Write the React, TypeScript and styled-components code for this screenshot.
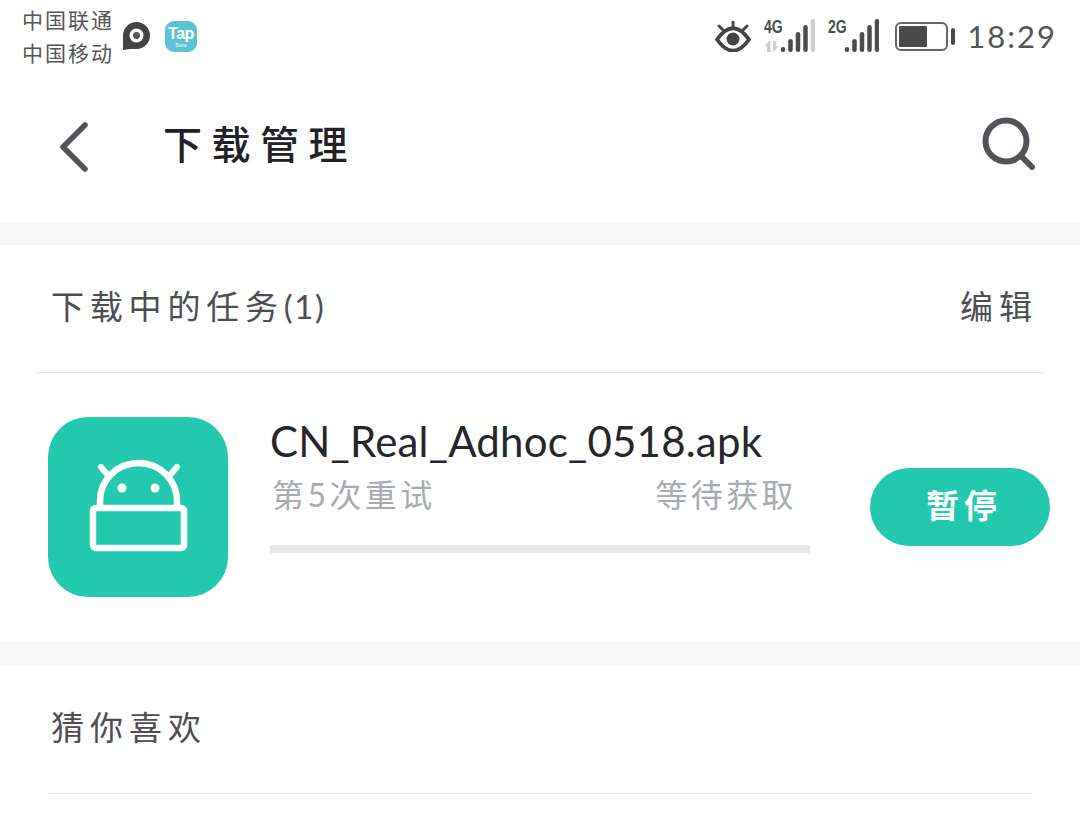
import React from 'react';
import styled, { createGlobalStyle } from 'styled-components';

const GlobalStyle = createGlobalStyle`
  html, body {
    margin: 0;
    padding: 0;
    background: #ffffff;
  }
  body {
    font-family: Lato, "Noto Sans CJK SC", sans-serif;
    overflow: hidden;
  }
`;

const BARS = [
  { x: 2, top: 28 },
  { x: 9.5, top: 20 },
  { x: 17, top: 13 },
  { x: 24.5, top: 6 },
  { x: 32, top: 0 },
];

const SignalBars = ({ fadedLast }: { fadedLast?: boolean }) => (
  <svg width="36" height="34" viewBox="0 0 36 34">
    {BARS.map((b, i) => (
      <rect
        key={b.x}
        x={b.x - 0.25}
        y={b.top}
        width="4.5"
        height={33 - b.top}
        rx="2.2"
        fill={fadedLast && i === 4 ? '#cfcfcf' : '#4c4c4c'}
      />
    ))}
  </svg>
);

const App = () => {
  return (
    <Page>
      <GlobalStyle />
      <StatusBar>
        <StatusLeft>
          <Carriers>
            <span>中国联通</span>
            <span>中国移动</span>
          </Carriers>
          <svg width="27" height="29" viewBox="0 0 27 29">
            <path d="M0 28 V13.5 A13.5 13.5 0 1 1 13.5 27 H7 Z" fill="#444444" />
            <circle cx="13.5" cy="13.5" r="7" fill="#ffffff" />
            <circle cx="13.5" cy="13.5" r="3.5" fill="#555555" />
          </svg>
          <TapLogo>
            Tap
            <TapBeta>Beta</TapBeta>
          </TapLogo>
        </StatusLeft>
        <StatusRight>
          <svg width="36" height="31" viewBox="0 0 36 31">
            <path d="M2 18.5 Q18 -4 34 18.5 Q18 41 2 18.5 Z" fill="none" stroke="#444" strokeWidth="3.8" strokeLinejoin="round" />
            <circle cx="18" cy="18" r="6.5" fill="#444" />
            <path d="M18 1 V5 M4 5 L8 9 M32 5 L28 9" stroke="#444" strokeWidth="3" strokeLinecap="round" />
          </svg>
          <NetworkGroup>
            <NetworkLabel>4G</NetworkLabel>
            <DataArrows>
              <svg width="16" height="11" viewBox="0 0 16 11">
                <path d="M5 0 L0.5 5 H3 V11 H6.5 V0 Z M9 0 V11 L15 5.5 H12 V0 Z" fill="#cccccc" />
              </svg>
            </DataArrows>
            <SignalBars fadedLast />
          </NetworkGroup>
          <NetworkGroup>
            <NetworkLabel>2G</NetworkLabel>
            <SignalBars />
          </NetworkGroup>
          <Battery>
            <BatteryLevel />
          </Battery>
          <BatteryNub />
          <Clock>18:29</Clock>
        </StatusRight>
      </StatusBar>

      <Header>
        <HeaderLeft>
          <svg width="38" height="56" viewBox="0 0 38 56">
            <path d="M35 8 L13 30 L35 52" fill="none" stroke="#53535a" strokeWidth="5.5" strokeLinecap="round" strokeLinejoin="round" />
          </svg>
          <Title>下载管理</Title>
        </HeaderLeft>
        <svg width="58" height="58" viewBox="0 0 58 58">
          <circle cx="25" cy="25" r="20.5" fill="none" stroke="#53535a" strokeWidth="6" />
          <path d="M41 41 L51 51" stroke="#53535a" strokeWidth="6" strokeLinecap="round" />
        </svg>
      </Header>

      <Band />

      <SectionHead>
        <SectionTitle>
          下载中的任务<TaskCount>(1)</TaskCount>
        </SectionTitle>
        <EditLink>编辑</EditLink>
      </SectionHead>
      <WideDivider />

      <TaskRow>
        <AppIcon>
          <svg width="100" height="96" viewBox="0 0 100 96">
            <path d="M13 8 L19 15 M89 8 L83 15" stroke="#ffffff" strokeWidth="6" strokeLinecap="round" />
            <path d="M12 48 V42 A38.5 38 0 0 1 89 42 V48" fill="none" stroke="#ffffff" strokeWidth="6.5" />
            <circle cx="34" cy="29" r="4.5" fill="#ffffff" />
            <circle cx="67" cy="29" r="4.5" fill="#ffffff" />
            <rect x="5" y="49" width="91" height="40" rx="3" fill="none" stroke="#ffffff" strokeWidth="6.5" />
          </svg>
        </AppIcon>
        <TaskBody>
          <FileName>CN_Real_Adhoc_0518.apk</FileName>
          <TaskMeta>
            <span>第5次重试</span>
            <span>等待获取</span>
          </TaskMeta>
          <ProgressTrack />
        </TaskBody>
        <PauseButton>暂停</PauseButton>
      </TaskRow>

      <Band />

      <GuessHead>猜你喜欢</GuessHead>
      <InsetDivider />
    </Page>
  );
};

export default App;

const Page = styled.div`
  width: 1080px;
  height: 818px;
  overflow: hidden;
  background: #ffffff;
`;

const StatusBar = styled.div`
  height: 72px;
  padding: 0 23px 0 22px;
  display: flex;
  justify-content: space-between;
  align-items: center;
  color: #555555;
`;

const StatusLeft = styled.div`
  display: flex;
  align-items: center;
`;

const Carriers = styled.div`
  display: flex;
  flex-direction: column;
  gap: 9px;
  width: 101px;
  font-size: 21px;
  line-height: 24px;
  letter-spacing: 2px;
  color: #555555;
  white-space: nowrap;
`;

const TapLogo = styled.div`
  position: relative;
  margin-left: 15px;
  width: 32px;
  height: 31px;
  box-sizing: border-box;
  padding-top: 5px;
  border-radius: 9px;
  background: #5bc3d4;
  color: #ffffff;
  font-family: "Liberation Sans", sans-serif;
  font-size: 16px;
  font-weight: 700;
  line-height: 16px;
  letter-spacing: -0.5px;
  text-align: center;
`;

const TapBeta = styled.div`
  font-size: 5px;
  line-height: 6px;
  letter-spacing: 0;
  color: #d8f2f6;
`;

const StatusRight = styled.div`
  display: flex;
  align-items: center;
  height: 34px;
`;

const NetworkGroup = styled.div`
  position: relative;
  margin-left: 13px;
  padding-left: 15px;
  display: flex;
  align-items: flex-end;
`;

const NetworkLabel = styled.div`
  position: absolute;
  left: 0;
  top: 0;
  font-family: "Liberation Sans", sans-serif;
  font-size: 18px;
  line-height: 17px;
  font-weight: 700;
  transform: scaleX(0.78);
  transform-origin: left top;
  color: #4c4c4c;
`;

const DataArrows = styled.div`
  position: absolute;
  left: 0;
  bottom: 1px;
  display: flex;
`;

const Battery = styled.div`
  margin-left: 16px;
  width: 53px;
  height: 29px;
  box-sizing: border-box;
  padding: 2px;
  border: 2px solid #666666;
  border-radius: 6px;
`;

const BatteryLevel = styled.div`
  width: 28px;
  height: 100%;
  background: #4a4a4a;
  border-radius: 1px;
`;

const BatteryNub = styled.div`
  margin-left: 3px;
  width: 4px;
  height: 17px;
  background: #4a4a4a;
  border-radius: 2px;
`;

const Clock = styled.div`
  margin-left: 12px;
  font-size: 31px;
  line-height: 34px;
  letter-spacing: 2px;
  color: #555555;
  white-space: nowrap;
`;

const Header = styled.div`
  height: 150px;
  box-sizing: border-box;
  padding: 0 41px 4px 50px;
  display: flex;
  justify-content: space-between;
  align-items: center;
`;

const HeaderLeft = styled.div`
  display: flex;
  align-items: center;
`;

const Title = styled.h1`
  margin: 0 0 2px 75px;
  font-size: 39px;
  line-height: 48px;
  font-weight: 500;
  letter-spacing: 9.5px;
  color: #222226;
  white-space: nowrap;
`;

const Band = styled.div`
  height: 23px;
  background: #f7f7f7;
`;

const SectionHead = styled.div`
  height: 127px;
  box-sizing: border-box;
  padding: 0 48px 6px 51px;
  display: flex;
  justify-content: space-between;
  align-items: center;
`;

const SectionTitle = styled.div`
  font-size: 33px;
  line-height: 42px;
  letter-spacing: 5.8px;
  color: #4d4d52;
  white-space: nowrap;
`;

const TaskCount = styled.span`
  letter-spacing: 1.6px;
`;

const EditLink = styled.div`
  font-size: 33px;
  line-height: 42px;
  letter-spacing: 6px;
  margin-right: -6px;
  color: #4d4d52;
`;

const WideDivider = styled.div`
  height: 1px;
  margin: 0 36px;
  background: #e9e9e9;
`;

const TaskRow = styled.div`
  height: 269px;
  box-sizing: border-box;
  padding: 44px 30px 0 48px;
  display: flex;
  align-items: flex-start;
`;

const AppIcon = styled.div`
  flex: none;
  width: 180px;
  height: 180px;
  border-radius: 40px;
  background: #22c9ae;
  display: flex;
  align-items: center;
  justify-content: center;
`;

const TaskBody = styled.div`
  width: 540px;
  margin-left: 42px;
`;

const FileName = styled.div`
  font-size: 42px;
  line-height: 48px;
  letter-spacing: 0.2px;
  color: #26262b;
  white-space: nowrap;
`;

const TaskMeta = styled.div`
  margin-top: 9px;
  padding: 0 13px 0 2px;
  display: flex;
  justify-content: space-between;
  font-size: 32px;
  line-height: 42px;
  letter-spacing: 3.4px;
  color: #a8abaf;
`;

const ProgressTrack = styled.div`
  margin-top: 29px;
  height: 8px;
  background: #e8e8e8;
`;

const PauseButton = styled.div`
  flex: none;
  width: 180px;
  height: 78px;
  box-sizing: border-box;
  padding: 0 0 6px 8px;
  margin: 51px 0 0 60px;
  border-radius: 39px;
  background: #22c9ae;
  color: #ffffff;
  font-size: 33px;
  font-weight: 700;
  letter-spacing: 5px;
  display: flex;
  align-items: center;
  justify-content: center;
`;

const GuessHead = styled.div`
  height: 128px;
  box-sizing: border-box;
  padding: 0 0 4px 51px;
  display: flex;
  align-items: center;
  font-size: 33px;
  line-height: 42px;
  letter-spacing: 6px;
  color: #4d4d52;
`;

const InsetDivider = styled.div`
  height: 1px;
  margin: 0 48px;
  background: #ececec;
`;
